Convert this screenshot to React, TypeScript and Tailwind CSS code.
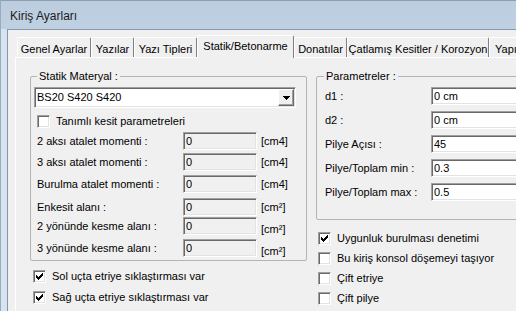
const tabs = [
  { label: 'Genel Ayarlar', w: 'w-[74px]' },
  { label: 'Yazılar', w: 'w-[43px]' },
  { label: 'Yazı Tipleri', w: 'w-[63px]' },
  { label: 'Statik/Betonarme', w: 'w-[97px]', active: true },
  { label: 'Donatılar', w: 'w-[53px]' },
  { label: 'Çatlamış Kesitler / Korozyon', w: 'w-[142px]' },
]

const sections = [
  { label: '2 aksı atalet momenti :', unit: '[cm4]', mt: 'mt-[1px]', unitCls: '' },
  { label: '3 aksı atalet momenti :', unit: '[cm4]', mt: 'mt-[3px]', unitCls: '' },
  { label: 'Burulma atalet momenti :', unit: '[cm4]', mt: 'mt-[4px]', unitCls: '' },
  { label: 'Enkesit alanı :', unit: '[cm²]', mt: 'mt-[5px]', unitCls: '' },
  { label: '2 yönünde kesme alanı :', unit: '[cm²]', mt: 'mt-[1px]', unitCls: 'translate-y-[3px]' },
  { label: '3 yönünde kesme alanı :', unit: '[cm²]', mt: 'mt-[4px]', unitCls: 'translate-y-[3px]' },
]

const params = [
  ['d1 :', '0 cm'],
  ['d2 :', '0 cm'],
  ['Pilye Açısı :', '45'],
  ['Pilye/Toplam min :', '0.3'],
  ['Pilye/Toplam max :', '0.5'],
]

const sunken = 'border border-t-[#a0a0a0] border-l-[#a0a0a0] border-r-white border-b-white shadow-[inset_1px_1px_0_#696969,inset_-1px_-1px_0_#e3e3e3]'

function CheckMark() {
  return (
    <svg width="7" height="7" viewBox="0 0 7 7" shapeRendering="crispEdges">
      <path d="M6 0h1v1h-1z M5 1h2v1h-2z M0 2h1v1h-1z M4 2h3v1h-3z M0 3h2v1h-2z M3 3h3v1h-3z M0 4h5v1h-5z M1 5h3v1h-3z M2 6h1v1h-1z" fill="#000" />
    </svg>
  )
}

function CheckRow({ label, checked, h }: { label: string; checked?: boolean; h: string }) {
  return (
    <div className={`flex items-center gap-[6px] ${h}`}>
      <span className={`flex h-[13px] w-[13px] shrink-0 items-center justify-center bg-white ${sunken}`}>
        {checked && <CheckMark />}
      </span>
      <span>{label}</span>
    </div>
  )
}

function Field({ value, disabled, w }: { value: string; disabled?: boolean; w: string }) {
  return (
    <div className={`h-[18px] shrink-0 pl-[2px] leading-[16px] ${w} ${sunken} ${disabled ? 'bg-[#f0f0f0]' : 'bg-white'}`}>
      {value}
    </div>
  )
}

function Legend({ text, left }: { text: string; left: string }) {
  return <span className={`absolute top-[-7px] bg-[#f0f0f0] px-[2px] leading-[13px] ${left}`}>{text}</span>
}

export default function App() {
  return (
    <div className="flex h-[311px] w-[516px] flex-col overflow-hidden border-l border-t border-l-[#9aabbe] border-t-[#8d9fb3] bg-gradient-to-b from-[#bccde0] via-[#d2e0ee] to-[#d9e5f2] font-['Liberation_Sans',Arial,sans-serif] text-[11px] text-black">
      <div className="flex h-[28px] shrink-0 items-center pl-[9px] pt-[2px] text-[12px] text-[#1b1b1b]">Kiriş Ayarları</div>
      <div className="flex min-h-0 flex-1">
        <div className="w-[6px] shrink-0 bg-[#d6e3f0]" />
        <div className="w-[600px] shrink-0 border-l border-t border-[#8797aa] bg-[#f0f0f0] pt-[5px]">
          <div className="flex h-[22px] items-end pl-[9px]">
            {tabs.map((t) =>
              t.active ? (
                <div key={t.label} className={`relative z-10 -mb-px h-[23px] shrink-0 rounded-t-[2px] border-l border-r border-t border-l-white border-t-white border-r-[#808080] bg-[#f0f0f0] pt-[4px] text-center leading-[13px] ${t.w}`}>
                  {t.label}
                </div>
              ) : (
                <div key={t.label} className={`h-[20px] shrink-0 whitespace-nowrap rounded-t-[2px] border-l border-r border-t border-l-white border-t-white border-r-[#808080] pt-[5px] text-center leading-[13px] ${t.w}`}>
                  {t.label}
                </div>
              )
            )}
            <div className="h-[20px] w-[40px] shrink-0 whitespace-nowrap rounded-t-[2px] border-l border-t border-white pl-[5px] pt-[5px] leading-[13px]">Yapı</div>
          </div>
          <div className="ml-[7px] h-[260px] border-l border-t border-white">
            <div className="flex items-start pl-[14px] pt-[18px]">
              <div className="w-[277px] shrink-0">
                <div className="relative rounded-[2px] border border-[#b4b4b4] px-[3px] pb-[3px] pt-[10px]">
                  <Legend text="Statik Materyal :" left="left-[6px]" />
                  <div className={`flex h-[21px] w-[262px] items-center bg-white ${sunken}`}>
                    <span className="flex-1 pl-[2px]">BS20 S420 S420</span>
                    <span className="mr-px flex h-[17px] w-[16px] items-center justify-center border border-b-[#696969] border-l-white border-r-[#696969] border-t-white bg-[#f0f0f0] shadow-[inset_-1px_-1px_0_#a0a0a0]">
                      <svg width="7" height="4" viewBox="0 0 7 4" shapeRendering="crispEdges">
                        <path d="M0 0h7v1h-7z M1 1h5v1h-5z M2 2h3v1h-3z M3 3h1v1h-1z" fill="#000" />
                      </svg>
                    </span>
                  </div>
                  <div className="mt-[3px] pl-[3px]">
                    <CheckRow label="Tanımlı kesit parametreleri" h="h-[20px]" />
                  </div>
                  {sections.map((s) => (
                    <div key={s.label} className={`flex h-[18px] items-center pl-[3px] ${s.mt}`}>
                      <span className="w-[146px] shrink-0">{s.label}</span>
                      <Field value="0" disabled w="w-[74px]" />
                      <span className={`ml-[4px] ${s.unitCls}`}>{s.unit}</span>
                    </div>
                  ))}
                </div>
                <div className="mt-[5px] pl-[3px]">
                  <CheckRow label="Sol uçta etriye sıklaştırması var" checked h="h-[21px]" />
                  <CheckRow label="Sağ uçta etriye sıklaştırması var" checked h="h-[21px]" />
                </div>
              </div>
              <div className="ml-[9px] w-[260px] shrink-0">
                <div className="relative flex flex-col gap-[6px] rounded-[2px] border border-[#b4b4b4] pb-[18px] pl-[8px] pt-[10px]">
                  <Legend text="Parametreler :" left="left-[7px]" />
                  {params.map(([label, value]) => (
                    <div key={label} className="flex h-[18px] items-center">
                      <span className="w-[106px] shrink-0">{label}</span>
                      <Field value={value} w="w-[140px]" />
                    </div>
                  ))}
                </div>
                <div className="mt-[8px] pl-[2px]">
                  <CheckRow label="Uygunluk burulması denetimi" checked h="h-[20px]" />
                  <CheckRow label="Bu kiriş konsol döşemeyi taşıyor" h="h-[20px]" />
                  <CheckRow label="Çift etriye" h="h-[20px]" />
                  <CheckRow label="Çift pilye" h="h-[20px]" />
                </div>
              </div>
            </div>
          </div>
        </div>
      </div>
    </div>
  )
}
